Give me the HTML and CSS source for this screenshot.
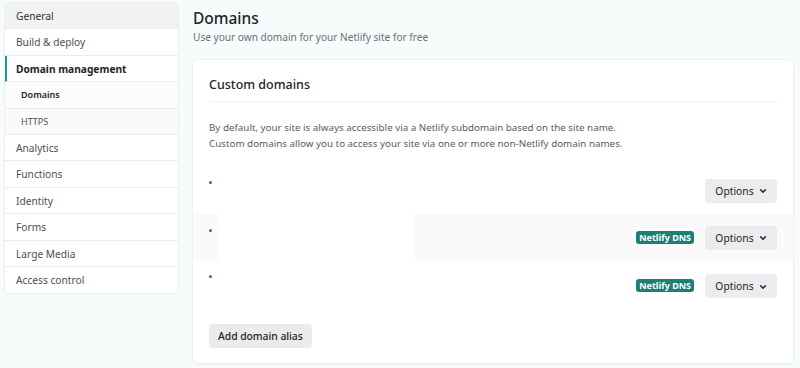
FILE: index.html
```html
<!DOCTYPE html>
<html>
<head>
<meta charset="utf-8">
<link rel="stylesheet" href="styles.css">
</head>
<body>
<div class="page">
  <nav class="sidebar">
    <a class="nav-item nav-general">General</a>
    <a class="nav-item">Build &amp; deploy</a>
    <a class="nav-item nav-active">Domain management</a>
    <a class="nav-sub nav-sub-active">Domains</a>
    <a class="nav-sub">HTTPS</a>
    <a class="nav-item">Analytics</a>
    <a class="nav-item">Functions</a>
    <a class="nav-item">Identity</a>
    <a class="nav-item">Forms</a>
    <a class="nav-item">Large Media</a>
    <a class="nav-item nav-last">Access control</a>
  </nav>
  <main class="main">
    <h1 class="title">Domains</h1>
    <p class="subtitle">Use your own domain for your Netlify site for free</p>
    <section class="card">
      <div class="card-header"><h2 class="card-title">Custom domains</h2></div>
      <div class="card-body">
        <p class="desc">By default, your site is always accessible via a Netlify subdomain based on the site name.<br>Custom domains allow you to access your site via one or more non-Netlify domain names.</p>
        <ul class="domains">
          <li class="domain-row">
            <span class="dot"></span>
            <span class="spacer"></span>
            <button class="options">Options <svg class="chev" viewBox="0 0 10 10" width="8" height="8"><path d="M2 3.5 L5 6.5 L8 3.5" fill="none" stroke="#1e2428" stroke-width="1.8" stroke-linecap="round" stroke-linejoin="round"/></svg></button>
          </li>
          <li class="domain-row row-grey">
            <span class="name-mask"><span class="dot"></span></span>
            <span class="spacer"></span>
            <span class="badge">Netlify DNS</span>
            <button class="options">Options <svg class="chev" viewBox="0 0 10 10" width="8" height="8"><path d="M2 3.5 L5 6.5 L8 3.5" fill="none" stroke="#1e2428" stroke-width="1.8" stroke-linecap="round" stroke-linejoin="round"/></svg></button>
          </li>
          <li class="domain-row row-third">
            <span class="dot"></span>
            <span class="spacer"></span>
            <span class="badge">Netlify DNS</span>
            <button class="options">Options <svg class="chev" viewBox="0 0 10 10" width="8" height="8"><path d="M2 3.5 L5 6.5 L8 3.5" fill="none" stroke="#1e2428" stroke-width="1.8" stroke-linecap="round" stroke-linejoin="round"/></svg></button>
          </li>
        </ul>
        <button class="add-btn">Add domain alias</button>
      </div>
    </section>
  </main>
</div>
</body>
</html>
```
FILE: styles.css
```css
* { box-sizing: border-box; }
html, body { margin: 0; padding: 0; }
body {
  background: #f6fbfb;
  font-family: "Noto Sans", "Open Sans", sans-serif;
  color: #2d3338;
  width: 800px;
  height: 368px;
  overflow: hidden;
}
.page {
  display: flex;
  align-items: flex-start;
  padding: 3px 7px 0 5px;
  gap: 15px;
}
.sidebar {
  width: 173px;
  flex: none;
  display: flex;
  flex-direction: column;
  background: #fff;
  border-radius: 4px;
  box-shadow: 0 0 0 1px #eceff0, 0 1px 2px rgba(0,0,0,0.05);
  overflow: hidden;
}
.nav-item {
  display: block;
  height: 26.4px;
  line-height: 26px;
  padding-left: 11px;
  font-size: 10.2px;
  color: #4b5054;
  border-bottom: 1px solid #ececec;
}
.nav-last { border-bottom: none; }
.nav-general { background: #f2f2f2; color: #2d3338; }
.nav-active {
  color: #1e2428;
  font-weight: 700;
  border-left: 2px solid #1f9d94;
  padding-left: 9px;
}
.nav-sub {
  display: block;
  height: 26.4px;
  line-height: 26px;
  padding-left: 16px;
  font-size: 9px;
  color: #4b5054;
  background: #fafafa;
  border-bottom: 1px solid #ececec;
}
.nav-sub-active { color: #1e2428; font-weight: 600; background: #fcfcfc; }
.main {
  flex: 1;
  display: flex;
  flex-direction: column;
}
.title {
  margin: 4px 0 0;
  font-size: 15.5px;
  font-weight: 500;
  color: #1e2428;
  line-height: 22px;
}
.subtitle {
  margin: 1px 0 0;
  font-size: 10.1px;
  color: #6b7075;
  line-height: 14px;
}
.card {
  margin-top: 16px;
  background: #fff;
  border-radius: 5px;
  box-shadow: 0 0 0 1px #eef1f2, 0 1px 3px rgba(0,0,0,0.08);
  height: 303px;
}
.card-header {
  margin: 0 16px;
  padding: 15px 0 6px;
  border-bottom: 1px solid #f3f3f3;
}
.card-title {
  margin: 0;
  font-size: 12.5px;
  font-weight: 500;
  color: #1e2428;
  line-height: 20px;
}
.card-body { padding: 0 16px; }
.desc {
  margin: 18px 0 0;
  font-size: 9.8px;
  line-height: 16px;
  color: #585d62;
}
.domains {
  list-style: none;
  margin: 15px -16px 0;
  padding: 0;
}
.domain-row {
  display: flex;
  align-items: center;
  height: 47px;
  padding: 0 16px;
}
.domain-row > .dot { align-self: flex-start; margin-top: 14px; }
.row-grey { background: #fafafa; }
.row-third .badge, .row-third .options { margin-top: 3px; }
.row-third .badge { margin-top: 2px; }
.name-mask {
  align-self: stretch;
  display: block;
  width: 196px;
  margin-left: 10px;
  background: #fff;
  padding-top: 15px;
}
.name-mask .dot { margin-left: -10px; }
.dot {
  display: block;
  width: 3px;
  height: 3px;
  border-radius: 50%;
  background: #1f7f78;
}
.spacer { flex: 1; }
.badge {
  background: #1a7f74;
  color: #fff;
  font-size: 9px;
  font-weight: 700;
  line-height: 13px;
  padding: 0 3px;
  border-radius: 3px;
  margin-right: 11px;
}
.options {
  font-family: inherit;
  border: none;
  background: #ebecee;
  border-radius: 4px;
  height: 24px;
  width: 72px;
  font-size: 10.3px;
  color: #1e2428;
  display: flex;
  align-items: center;
  justify-content: center;
  gap: 5px;
  padding: 0;
}
.chev { display: block; margin-top: 1px; }
.add-btn {
  font-family: inherit;
  margin-top: 16px;
  border: none;
  background: #ebebeb;
  border-radius: 4px;
  height: 24px;
  padding: 0 9px;
  font-size: 10.3px;
  font-weight: 500;
  color: #1e2428;
}
```
